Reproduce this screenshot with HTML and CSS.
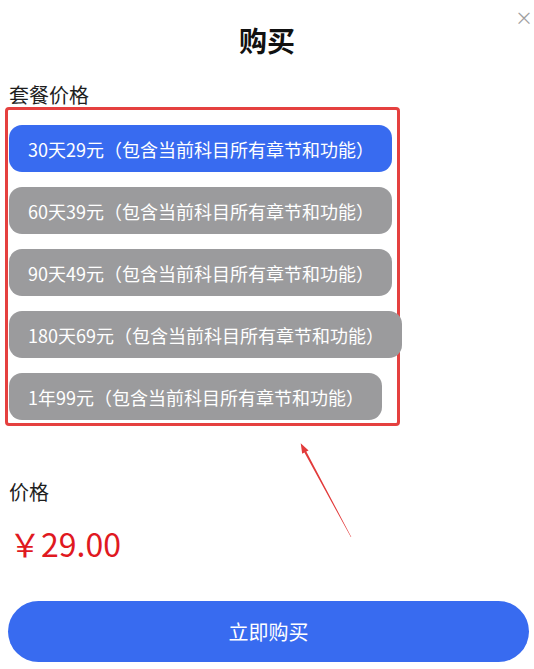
FILE: index.html
```html
<!DOCTYPE html>
<html lang="zh-CN">
<head>
<meta charset="utf-8">
<title>购买</title>
<link rel="stylesheet" href="styles.css">
</head>
<body>
<div class="page">
  <span class="close">×</span>
  <h1 class="title">购买</h1>
  <div class="label">套餐价格</div>
  <div class="plans">
    <div class="plan active">30天29元（包含当前科目所有章节和功能）</div>
    <div class="plan">60天39元（包含当前科目所有章节和功能）</div>
    <div class="plan">90天49元（包含当前科目所有章节和功能）</div>
    <div class="plan">180天69元（包含当前科目所有章节和功能）</div>
    <div class="plan">1年99元（包含当前科目所有章节和功能）</div>
  </div>
  <div class="label price-label">价格</div>
  <div class="price">￥29.00</div>
  <button class="buy">立即购买</button>
  <svg class="arrow" width="534" height="669" viewBox="0 0 534 669">
    <polygon points="300.7,443.3 308.6,450.6 306.3,451.6 351.3,536.9 350.8,537.1 304.4,452.6 302.2,453.8" fill="#e23b3b"/>
  </svg>
</div>
</body>
</html>
```

FILE: styles.css
```css
html, body {
  margin: 0;
  padding: 0;
  background: #ffffff;
}

body {
  font-family: "Noto Sans CJK SC", "Noto Sans", sans-serif;
  color: #1a1a1a;
}

.page {
  position: relative;
  width: 534px;
  height: 669px;
  padding: 0 5px;
  box-sizing: border-box;
  display: flex;
  flex-direction: column;
  align-items: flex-start;
}

.close {
  position: absolute;
  top: 5px;
  right: 1px;
  font-size: 18px;
  line-height: 24px;
  color: #a0a0a0;
}

.title {
  align-self: stretch;
  margin: 20px 0 0;
  font-size: 28px;
  font-weight: 700;
  line-height: 40px;
  text-align: center;
  color: #111;
}

.label {
  margin-top: 23px;
  padding-left: 4px;
  font-size: 20px;
  line-height: 24px;
  color: #1e1e1e;
}

.plans {
  width: 395px;
  box-sizing: border-box;
  border: 3px solid #e5403f;
  border-radius: 4px;
  padding: 15px 0 3px 1px;
  display: flex;
  flex-direction: column;
  align-items: flex-start;
  gap: 15px;
}

.plan {
  height: 47px;
  padding: 0 18px 0 19px;
  box-sizing: border-box;
  display: flex;
  align-items: center;
  white-space: nowrap;
  border-radius: 13px;
  background: #9b9b9d;
  color: #ffffff;
  font-size: 18px;
}

.plan.active {
  background: #386bf0;
}

.price-label {
  margin-top: 54px;
}

.price {
  margin-top: 19px;
  padding-left: 4px;
  font-size: 32px;
  line-height: 40px;
  color: #e0191f;
}

.buy {
  margin-top: 38px;
  margin-left: 3px;
  width: 521px;
  height: 61px;
  border: none;
  border-radius: 31px;
  background: #386bf0;
  color: #ffffff;
  font-family: "Noto Sans CJK SC", "Noto Sans", sans-serif;
  font-size: 20px;
  padding: 0;
}

.arrow {
  position: absolute;
  left: 0;
  top: 0;
  pointer-events: none;
}
```
